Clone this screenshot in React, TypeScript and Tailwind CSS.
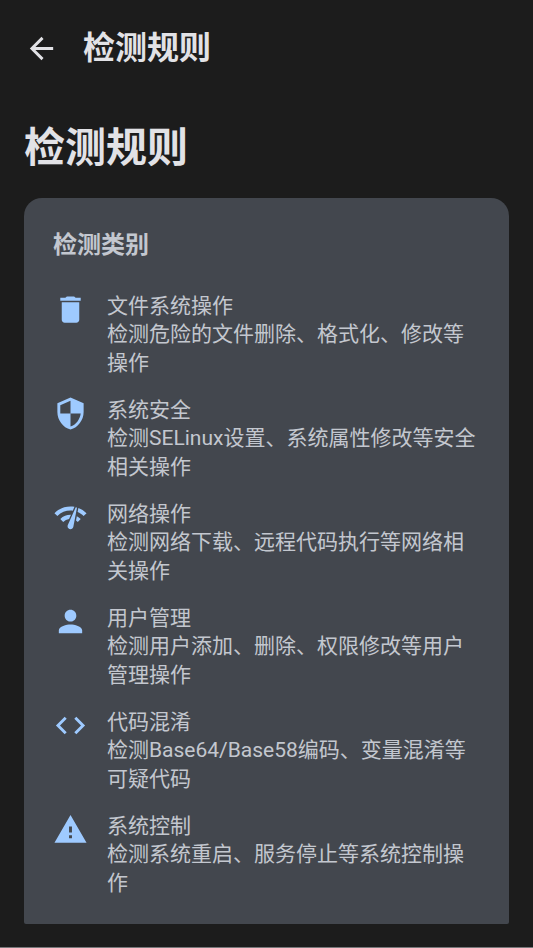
import React from 'react';
import {
  MdArrowBack,
  MdCode,
  MdDelete,
  MdNetworkCheck,
  MdPerson,
  MdSecurity,
  MdWarning,
} from 'react-icons/md';

const categories = [
  { icon: MdDelete, title: '文件系统操作', description: '检测危险的文件删除、格式化、修改等操作' },
  { icon: MdSecurity, title: '系统安全', description: '检测SELinux设置、系统属性修改等安全相关操作' },
  { icon: MdNetworkCheck, title: '网络操作', description: '检测网络下载、远程代码执行等网络相关操作' },
  { icon: MdPerson, title: '用户管理', description: '检测用户添加、删除、权限修改等用户管理操作' },
  { icon: MdCode, title: '代码混淆', description: '检测Base64/Base58编码、变量混淆等可疑代码' },
  { icon: MdWarning, title: '系统控制', description: '检测系统重启、服务停止等系统控制操作' },
];

const App = () => {
  return (
    <div
      lang="zh-CN"
      className="min-h-screen border-b border-[#77777a] bg-[#1c1c1c] font-['Roboto','Noto_Sans_CJK_SC',sans-serif] text-[#e2e2e6]"
    >
      {/* Top bar */}
      <header className="flex h-24 items-center gap-6 px-6">
        <button type="button" aria-label="返回">
          <MdArrowBack className="size-[35px]" />
        </button>
        <div className="text-[32px] leading-[56px] font-bold">检测规则</div>
      </header>

      <main className="px-6 pt-6">
        <h1 className="text-[41px] leading-[56px] font-bold">检测规则</h1>

        {/* Categories */}
        <section className="mt-[22px] rounded-t-[18px] rounded-b-xs bg-[#43474e] px-[29px] pt-[29px] pb-[26px] text-[#c3c7cf]">
          <h2 className="text-[24px] leading-9 font-bold">检测类别</h2>
          <ul className="mt-[29px] flex flex-col gap-[18px]">
            {categories.map(({ icon: Icon, title, description }) => (
              <li key={title} className="flex items-start gap-[19px]">
                <Icon className="size-[35px] shrink-0 text-[#9ecaff]" />
                <div className="flex-1 text-[21px]">
                  <h3 className="leading-7">{title}</h3>
                  <p className="leading-[29px]">{description}</p>
                </div>
              </li>
            ))}
          </ul>
        </section>
      </main>
    </div>
  );
};

export default App;
